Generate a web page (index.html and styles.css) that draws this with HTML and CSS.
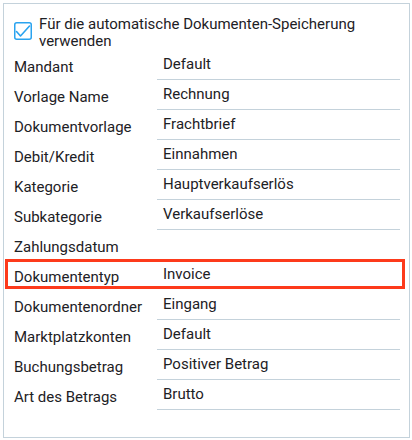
FILE: index.html
```html
<!DOCTYPE html>
<html lang="de">
<head>
<meta charset="utf-8">
<link rel="stylesheet" href="styles.css">
</head>
<body>
<div class="card">
  <label class="check">
    <span class="box">
      <svg width="18" height="18" viewBox="0 0 18 18"><rect x="0.75" y="0.75" width="16.5" height="16.5" rx="2" fill="none" stroke="#2aa3ef" stroke-width="1.5"/><path d="M2.5 9.5 L6.5 14 L15.5 4" fill="none" stroke="#2aa3ef" stroke-width="1.6" stroke-linecap="round" stroke-linejoin="round"/></svg>
    </span>
    <span class="ctext">Für die automatische Dokumenten-Speicherung verwenden</span>
  </label>
  <div class="rows">
    <div class="row"><div class="lbl">Mandant</div><div class="val">Default</div></div>
    <div class="row"><div class="lbl">Vorlage Name</div><div class="val">Rechnung</div></div>
    <div class="row"><div class="lbl">Dokumentvorlage</div><div class="val">Frachtbrief</div></div>
    <div class="row"><div class="lbl">Debit/Kredit</div><div class="val">Einnahmen</div></div>
    <div class="row"><div class="lbl">Kategorie</div><div class="val">Hauptverkaufserlös</div></div>
    <div class="row"><div class="lbl">Subkategorie</div><div class="val">Verkaufserlöse</div></div>
    <div class="row"><div class="lbl">Zahlungsdatum</div><div class="val"></div></div>
    <div class="row hl"><div class="lbl">Dokumententyp</div><div class="val">Invoice</div></div>
    <div class="row"><div class="lbl">Dokumentenordner</div><div class="val">Eingang</div></div>
    <div class="row"><div class="lbl">Marktplatzkonten</div><div class="val">Default</div></div>
    <div class="row"><div class="lbl">Buchungsbetrag</div><div class="val">Positiver Betrag</div></div>
    <div class="row"><div class="lbl">Art des Betrags</div><div class="val">Brutto</div></div>
  </div>
</div>
</body>
</html>
```
FILE: styles.css
```css
* { box-sizing: border-box; }
html, body { margin: 0; padding: 0; background: #ffffff; }
body {
  font-family: Roboto, "Liberation Sans", sans-serif;
  font-size: 15px;
  color: #1d2125;
}
.card {
  margin: 3px 0 0 3px;
  width: 407px;
  height: 435px;
  border: 1px solid #c4d2db;
  padding: 11px 9px 0 10px;
}
.check {
  display: flex;
  align-items: flex-start;
  gap: 7px;
  line-height: 17px;
}
.box {
  display: block;
  width: 18px;
  height: 18px;
  margin-top: 7px;
  flex: none;
}
.box svg { display: block; }
.ctext { padding-top: 1px; }
.rows {
  display: flex;
  flex-direction: column;
}
.row {
  display: grid;
  grid-template-columns: 143px 1fr;
  height: 30px;
  position: relative;
}
.lbl {
  padding-top: 8px;
  line-height: 18px;
}
.val {
  border-bottom: 1px solid #c4d2db;
  padding-left: 6px;
  padding-top: 5px;
  line-height: 18px;
}
.row.hl .val { border-bottom-color: transparent; }
.row.hl::after {
  content: "";
  position: absolute;
  top: -1px;
  bottom: 1px;
  left: -9px;
  right: -5px;
  border: 3px solid #fd3a1b;
  pointer-events: none;
}
```
